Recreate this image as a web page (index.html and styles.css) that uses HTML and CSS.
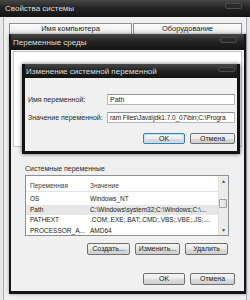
FILE: index.html
```html
<!DOCTYPE html>
<html lang="ru">
<head>
  <meta charset="UTF-8" />
  <title>Переменные среды</title>
  <link rel="stylesheet" href="styles.css">
</head>
<body>
  <div class="win outer">
    <div class="titlebar"><span>Свойства системы</span><span class="close"></span></div>
    <div class="client">
      <div class="tabs">
        <div class="tab tab-wide">Имя компьютера</div>
        <div class="tab">Оборудование</div>
      </div>
    </div>

    <!-- Environment variables window -->
    <div class="win env">
      <div class="titlebar"><span>Переменные среды</span><span class="close"></span></div>
      <div class="env-client">
        <div class="userlist"></div>
        <div class="group-label">Системные переменные</div>
        <div class="listbox">
          <div class="rows">
            <div class="row head"><span>Переменная</span><span>Значение</span></div>
            <div class="row"><span>OS</span><span>Windows_NT</span></div>
            <div class="row sel"><span>Path</span><span>C:\Windows\system32;C:\Windows;C:\...</span></div>
            <div class="row"><span>PATHEXT</span><span>.COM;.EXE;.BAT;.CMD;.VBS;.VBE;.JS;....</span></div>
            <div class="row"><span>PROCESSOR_A...</span><span>AMD64</span></div>
          </div>
          <div class="scroll">
            <div class="arrow">&#9652;</div>
            <div class="track"><div class="thumb"></div></div>
            <div class="arrow">&#9662;</div>
          </div>
        </div>
        <div class="btnrow">
          <div class="btn w43">Создать...</div>
          <div class="btn w45">Изменить...</div>
          <div class="btn w43">Удалить</div>
        </div>
        <div class="btnrow final">
          <div class="btn w42">OK</div>
          <div class="btn w45">Отмена</div>
        </div>
      </div>

      <!-- Edit dialog on top -->
      <div class="win edit">
        <div class="titlebar"><span>Изменение системной переменной</span><span class="close"></span></div>
        <div class="form">
          <div class="field">
            <label>Имя переменной:</label>
            <div class="input">Path</div>
          </div>
          <div class="field">
            <label>Значение переменной:</label>
            <div class="input value">ram Files\Java\jdk1.7.0_07\bin;C:\Progra</div>
          </div>
          <div class="dlg-buttons">
            <div class="btn w42 default">OK</div>
            <div class="btn w45">Отмена</div>
          </div>
        </div>
      </div>
    </div>
  </div>
</body>
</html>
```

FILE: styles.css
```css
* { box-sizing: border-box; margin: 0; padding: 0 }
html, body {
  width: 250px; height: 300px;
  overflow: hidden;
  font-family: 'Liberation Sans', Arial, sans-serif;
  font-size: 7px;
  color: #1b1b1b;
  background: #e6e8eb;
}

/*–––– Window chrome ––––*/
.outer {
  position: relative;
  width: 250px; height: 300px;
  background: #e6e8eb;
}
.titlebar {
  display: flex; align-items: center;
  height: 17px;
  padding: 0 8px 0 5px;
  background: linear-gradient(#474747, #242424 45%, #141414);
  color: #dedede;
  font-size: 8px;
  white-space: nowrap;
}
.titlebar .close {
  align-self: flex-start;
  margin: 3px 0 0 auto;
  width: 17px; height: 6px;
  border: 1px solid #4c4c4c;
  border-radius: 2px;
  background: #2a2a2a;
}
.outer > .client {
  height: 283px;
  margin: 0 3px;
  border-left: 1px solid #a9abae;
  border-right: 1px solid #a9abae;
  background: #f0f0f0;
  padding: 6px 0 0 5px;
}

/*–––– Tabs ––––*/
.tabs { display: flex; gap: 1px }
.tab {
  width: 109px; height: 12px;
  border: 1px solid #8d9096; border-bottom: none;
  background: linear-gradient(#fdfdfd, #e4e4e4);
  text-align: center;
  line-height: 10px;
  font-size: 7.5px;
}
.tab-wide { width: 123px }

/*–––– Environment window ––––*/
.env {
  position: absolute; left: 9px; top: 34px;
  width: 237px; height: 260px;
  border: 2px solid #151515; border-top: 0;
  border-bottom-width: 3px;
  background: #f0f0f0;
  box-shadow: 0 0 3px rgba(0,0,0,0.4);
}
.env > .titlebar { height: 16px; padding: 0 7px 0 2px }
.env-client { padding: 1px 2px 0 }
.userlist {
  height: 96px;
  background: #fff;
  border: 1px solid #c4c4c4;
}
.group-label {
  margin: 17px 0 0 12px;
  line-height: 10px;
  color: #2a2a2a;
}

/*–––– List box ––––*/
.listbox {
  display: flex;
  width: 204px; height: 61px;
  margin: 1px 0 0 12px;
  border: 1px solid #8e8f8f;
  background: #fff;
}
.rows { flex: 1; overflow: hidden }
.row {
  display: grid; grid-template-columns: 60px 1fr;
  height: 10.5px; line-height: 10.5px;
  padding-left: 4px;
  font-size: 6.5px;
  white-space: nowrap; overflow: hidden;
}
.row span { overflow: hidden }
.row.head {
  height: 16px;
  padding-top: 5px;
  line-height: 10px;
  border-bottom: 1px solid #e4e4e4;
  margin-bottom: 2px;
  color: #3a3a3a;
}
.row.sel { background: #e6e6e6 }
.scroll {
  display: flex; flex-direction: column;
  width: 10px;
  background: #ececec;
  border-left: 1px solid #e0e0e0;
}
.arrow {
  height: 10px;
  text-align: center;
  font-size: 6px; line-height: 10px;
  color: #555;
}
.track { flex: 1; padding-top: 13px }
.thumb {
  width: 8px; height: 9px;
  border: 1px solid #a0a0a0;
  border-radius: 1px;
  background: linear-gradient(90deg, #f4f4f4, #dcdcdc);
}

/*–––– Buttons ––––*/
.btnrow {
  display: flex; justify-content: flex-end; gap: 5px;
  margin-top: 7px;
  padding-right: 14px;
}
.btnrow.final { margin-top: 18px; padding-right: 7px }
.btn {
  height: 12px;
  border: 1px solid #707070;
  border-radius: 2px;
  background: linear-gradient(#f3f3f3, #ebebeb 50%, #dddddd 50%, #cfcfcf);
  text-align: center;
  line-height: 10px;
  white-space: nowrap;
}
.w42 { width: 42px }
.w43 { width: 43px }
.w45 { width: 45px }
.btn.default {
  border-color: #3c7fb1;
  box-shadow: inset 0 0 0 1px #bfe6f8;
}

/*–––– Edit dialog ––––*/
.edit {
  position: absolute; left: 11px; top: 30px;
  width: 218px; height: 90px;
  border: 3px solid #121212; border-top: 0;
  background: #f0f0f0;
  box-shadow: 0 0 4px rgba(0,0,0,0.6);
}
.edit > .titlebar { height: 14px; padding: 0 2px 0 1px }
.edit > .titlebar .close { margin-top: 3px; height: 5px }
.form { padding: 16px 2px 0 3px }
.field { display: flex; align-items: center; height: 11px }
.field + .field { margin-top: 7px }
.field label { width: 79px; color: #2a2a2a; white-space: nowrap }
.input {
  flex: 1;
  height: 11px;
  border: 1px solid #b5b8be; border-top-color: #8e939a;
  background: #fff;
  padding-left: 2px;
  line-height: 9px;
  white-space: nowrap; overflow: hidden;
}
.input.value { font-size: 6.6px; letter-spacing: -0.1px }
.dlg-buttons {
  display: flex; justify-content: flex-end; gap: 5px;
  margin-top: 10px;
}
.dlg-buttons .btn { height: 11px; line-height: 9px }
```
